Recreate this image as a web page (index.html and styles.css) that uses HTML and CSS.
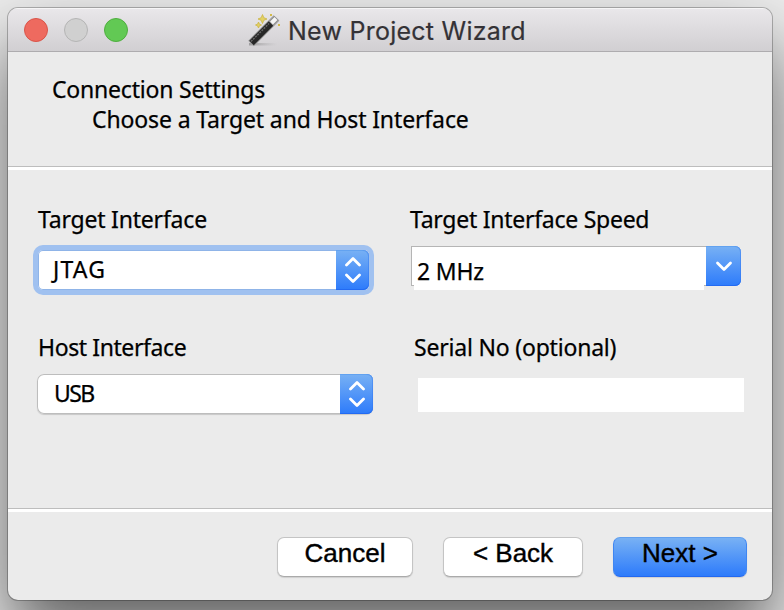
FILE: index.html
```html
<!DOCTYPE html>
<html lang="en">
<head>
<meta charset="utf-8">
<title>New Project Wizard</title>
<link rel="stylesheet" href="styles.css">
</head>
<body>
<main class="window">
  <header class="titlebar">
    <div class="lights"><i class="light red"></i><i class="light gray"></i><i class="light green"></i></div>
    <svg class="wand" width="34" height="34" viewBox="0 0 34 34">
      <defs>
        <linearGradient id="floor"><stop offset="0" stop-color="#777" stop-opacity=".6"/><stop offset="1" stop-color="#999" stop-opacity="0"/></linearGradient>
      </defs>
      <path class="floor" d="M2 30h28v2.500H2z"/>
      <path class="shaft-edge" d="M4 30.500 29.500 5"/>
      <path class="shaft" d="M4.500 30 24 10.500"/>
      <path class="shaft-shine" d="M4 28.500 22 10.500"/>
      <path class="tip" d="M24.500 10 29.500 5"/>
      <path class="tip-core" d="M24.500 10 29 5.500"/>
      <path class="sparkle" d="M15.500 1.500l1.300 3.200L20 6l-3.200 1.300-1.300 3.200-1.300-3.200L11 6l3.200-1.300zM11.500 9l.9 2.100 2.100.9-2.100.9-.9 2.100-.9-2.100-2.100-.9 2.100-.9z"/>
      <path class="spark" d="M23 1h2v2h-2zM31 11h2v2h-2z"/>
    </svg>
    <h1 class="title">New Project Wizard</h1>
  </header>
  <section class="intro">
    <h2 class="heading">Connection Settings</h2>
    <p class="subheading">Choose a Target and Host Interface</p>
  </section>
  <section class="settings">
    <div class="field target">
      <span class="label l-target">Target Interface</span>
      <div class="select focused"><span class="value v-jtag">JTAG</span><span class="stepper"><svg width="18" height="26" viewBox="0 0 18 26"><path d="M2.500 8 9 1.500 15.500 8M2.500 18 9 24.500l6.500-6.500"/></svg></span></div>
    </div>
    <div class="field speed">
      <span class="label l-speed">Target Interface Speed</span>
      <div class="combo"><div class="entry"><span class="value v-mhz">2 MHz</span></div><span class="arrow"><svg width="18" height="12" viewBox="0 0 18 12"><path d="M2.500 3 9 9.500 15.500 3"/></svg></span></div>
    </div>
    <div class="field host">
      <span class="label l-host">Host Interface</span>
      <div class="select"><span class="value v-usb">USB</span><span class="stepper"><svg width="18" height="26" viewBox="0 0 18 26"><path d="M2.500 8 9 1.500 15.500 8M2.500 18 9 24.500l6.500-6.500"/></svg></span></div>
    </div>
    <div class="field serial">
      <span class="label l-serial">Serial No (optional)</span>
      <div class="text-input"></div>
    </div>
  </section>
  <footer class="actions">
    <div class="button cancel"><span>Cancel</span></div>
    <div class="button back"><span>&lt; Back</span></div>
    <div class="button next"><span>Next &gt;</span></div>
  </footer>
</main>
</body>
</html>
```

FILE: styles.css
```css
* { box-sizing: border-box; }
html, body { margin: 0; width: 784px; height: 610px; overflow: hidden; }
body { background: #ececec; padding: 8px 12px 10px 8px; font-family: "Noto Sans", sans-serif; color: #000; }
h1, h2, p { margin: 0; font-weight: 400; }
.window { height: 592px; border-radius: 10px; background: #ebebeb; display: flex; flex-direction: column; overflow: hidden;
  box-shadow: 0 0 0 1px rgba(0,0,0,.25), 0 36px 70px rgba(0,0,0,.6); }
.titlebar { height: 44px; flex: none; display: flex; background: linear-gradient(#e9e7ea, #d1cfd2); border-bottom: 1px solid #aeacaf; border-top: 1px solid #f6f5f6; }
.lights { display: flex; gap: 16px; padding: 9px 0 0 16px; width: 239px; }
.light { width: 24px; height: 24px; border-radius: 50%; border: 1px solid; }
.red { background: #ee6a5f; border-color: #d95449; }
.gray { background: #d0d0d0; border-color: #b4b4b4; }
.green { background: #62c954; border-color: #4fae3f; }
.wand { margin-top: 4px; }
.title { font: 25px/44px Inter, sans-serif; color: #343236; white-space: nowrap; padding-left: 7px; letter-spacing: .25px; -webkit-text-stroke: .2px #343236; }

.wand path { fill: none; }
.wand .floor { fill: url(#floor); }
.shaft-edge { stroke: #a0a0a0; stroke-width: 8; }
.shaft { stroke: #272727; stroke-width: 6.4; }
.shaft-shine { stroke: #666; stroke-width: 1.5; stroke-dasharray: 2 1; }
.tip { stroke: #8d8d8d; stroke-width: 6; }
.tip-core { stroke: #f5f5f5; stroke-width: 4; }
.wand .sparkle { fill: #e3d165; stroke: #cbb545; stroke-width: .8; }
.wand .spark { fill: #d3bb4a; }

.intro { height: 114px; flex: none; padding: 22px 0 0 44px; }
.heading, .subheading, .label, .value { font-size: 23px; line-height: 30px; white-space: nowrap; -webkit-text-stroke: .25px #000; }
.heading { letter-spacing: -.2px; }
.subheading { padding-left: 40px; letter-spacing: -.13px; }
.l-target, .l-serial, .v-mhz { letter-spacing: -.2px; }
.l-speed { letter-spacing: -.26px; }
.l-host { letter-spacing: -.4px; }
.v-jtag { letter-spacing: 1.2px; }
.v-usb { letter-spacing: -1.6px; }

.settings { height: 342px; flex: none; border-top: 1px solid #bdbdbd; box-shadow: inset 0 3px #fff; padding: 37px 0 0 28px;
  display: grid; grid-template-columns: 373px 360px; grid-template-rows: 128px 90px; }
.field { display: flex; flex-direction: column; }
.label { padding-left: 2px; }
.speed .label { padding-left: 1px; }
.serial .label { padding-left: 5px; }
.select { margin: 12px 0 0 1px; width: 336px; height: 40px; border-radius: 7px; background: #fff; display: flex; justify-content: space-between; box-shadow: inset 0 0 0 1px #bdbdbd, 0 1px 1px rgba(0,0,0,.15); padding-left: 17px; }
.select .value { line-height: 39px; }
.focused { margin: 16px 0 0 2px; width: 331px; padding-left: 15px; box-shadow: inset 0 0 0 1px #8fb4e8, 0 0 0 5px #a0c1f0; border-radius: 5px; }
.stepper, .arrow { width: 33px; background: linear-gradient(#78b1f4, #2d7bfb); border-radius: 0 6px 6px 0; display: flex; align-items: center; justify-content: center; box-shadow: inset -1px 0 rgba(45,115,240,.4), inset 0 1px #62a2f0, inset 0 -1px #236af2; }
.stepper path, .arrow path { fill: none; stroke: #fff; stroke-width: 2.8; stroke-linecap: round; stroke-linejoin: round; }
.combo { display: flex; margin: 12px 0 0 2px; }
.entry { width: 295px; height: 44px; border-top: 1px solid #b5b5b5; padding-left: 6px;
  background: linear-gradient(#fff,#fff) 3px 0/290px 44px no-repeat, linear-gradient(#b5b5b5,#b5b5b5) 0 0/1px 39px no-repeat, linear-gradient(#b5b5b5,#b5b5b5) 0 38px/295px 1px no-repeat, linear-gradient(#fff,#fff) 0 0/295px 39px no-repeat; }
.entry .value { line-height: 49px; }
.arrow { width: 35px; height: 40px; }
.text-input { width: 326px; height: 34px; margin: 16px 0 0 9px; background: #fff; }
.actions { height: 92px; flex: none; border-top: 1px solid #bdbdbd; box-shadow: inset 0 3px #fff; padding: 28px 0 0 269px; display: flex; }
.button { height: 40px; border-radius: 7px; background: #fff; border: 1px solid #c4c4c4; border-bottom-color: #aaa; box-shadow: 0 1px 1px rgba(0,0,0,.12); font: 26px/31px "Liberation Sans", sans-serif; white-space: nowrap; text-align: center; -webkit-text-stroke: .4px #000; }
.cancel { width: 136px; }
.back { width: 140px; margin-left: 30px; }
.next { width: 134px; margin-left: 30px; background: linear-gradient(#78b1f4, #2d7bfb); border-color: #62a0ee #3f86f2 #2368ef; }
```
